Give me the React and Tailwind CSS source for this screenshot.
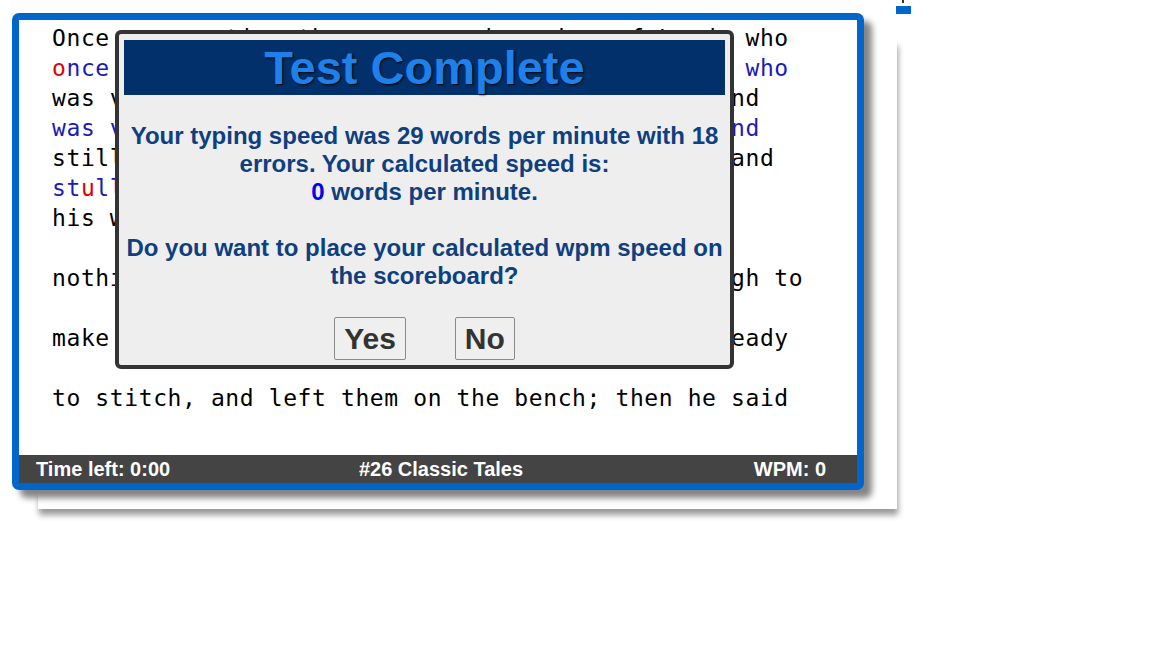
import React from 'react'

const mono = "font-['DejaVu_Sans_Mono',monospace] text-[23px] tracking-[0.6px]"
const sans = "font-['Liberation_Sans',Arial,sans-serif]"

const OK = 'text-[#1a1ab8]'
const ERR = 'text-[#e00000]'

function Line({ children }) {
  return <div className="h-[30px] leading-[30px] whitespace-pre">{children}</div>
}

function ResultDialog() {
  return (
    <div className={`absolute left-[96px] top-[10px] w-[619px] h-[339px] border-4 border-[#333] rounded-[6px] bg-[#eeeeee] flex flex-col ${sans}`}>
      <div className="mx-[5px] mt-[6px] h-[55px] bg-[#02306a] text-center text-[47px] font-bold leading-[55px] text-[#1f80ea] [text-shadow:1px_1px_2px_#000]">
        Test Complete
      </div>
      <div className="mt-[27px] text-center text-[24px] font-bold leading-[28px] text-[#0f3f7f] whitespace-nowrap">
        <div>Your typing speed was 29 words per minute with 18</div>
        <div>errors. Your calculated speed is:</div>
        <div>
          <span className="text-[#0000ee]">0</span> words per minute.
        </div>
        <div className="h-[28px]" />
        <div>Do you want to place your calculated wpm speed on</div>
        <div>the scoreboard?</div>
      </div>
      <div className="mt-[27px] flex justify-center gap-[49px]">
        <button className="h-[43px] px-[9px] flex items-center border border-[#8a8a8a] rounded-[2px] bg-[#efefef] text-[30px] font-bold leading-none text-[#333]">
          Yes
        </button>
        <button className="h-[43px] px-[9px] flex items-center border border-[#8a8a8a] rounded-[2px] bg-[#efefef] text-[30px] font-bold leading-none text-[#333]">
          No
        </button>
      </div>
    </div>
  )
}

export default function App() {
  return (
    <div className="relative w-[1152px] h-[648px] bg-white overflow-hidden">
      {/* stray bits at the top right */}
      <div className="absolute left-[902px] top-0 w-[2px] h-[3px] bg-[#333]" />
      <div className="absolute left-[896px] top-[6px] w-[15px] h-[8px] bg-[#0066cc]" />

      <div className="relative ml-[12px] mt-[13px] w-[852px]">
        {/* back sheet */}
        <div className="absolute left-[26px] top-[27px] w-[859px] h-[469px] bg-white shadow-[1px_6px_6px_#9a9a9a]" />

        <div className="relative border-[7px] border-[#0066cc] rounded-[7px] bg-white shadow-[8px_8px_6px_#858585]">
          <div className={`pl-[33px] pt-[3px] pb-[12px] text-black ${mono}`}>
            <Line>Once upon a time there was a shoemaker of Leeds who</Line>
            <Line>
              <span className={ERR}>o</span>
              <span className={OK}>nce upon a time there was a shoemaker of Leeds who</span>
            </Line>
            <Line>was very honest and worked very hard all day, and</Line>
            <Line>
              <span className={OK}>was very honest and worked very hard all day, and</span>
            </Line>
            <Line>still he could never earn enough to live upon; and</Line>
            <Line>
              <span className={OK}>st</span>
              <span className={ERR}>u</span>
              <span className={OK}>ll he co</span>
            </Line>
            <Line>his wife and children, until at last he had</Line>
            <Line> </Line>
            <Line>nothing left but a single piece of leather enough to</Line>
            <Line> </Line>
            <Line>make one pair of shoes. He then cut them out, ready</Line>
            <Line> </Line>
            <Line>to stitch, and left them on the bench; then he said</Line>
            <Line> </Line>
          </div>

          <div className={`h-[28px] bg-[#444] text-white font-bold text-[20px] leading-[28px] grid grid-cols-[1fr_auto_1fr] pl-[17px] pr-[11px] ${sans}`}>
            <span>Time left: 0:00</span>
            <span>#26 Classic Tales</span>
            <span className="text-right pr-[20px]">WPM: 0</span>
          </div>

          <ResultDialog />
        </div>
      </div>
    </div>
  )
}
